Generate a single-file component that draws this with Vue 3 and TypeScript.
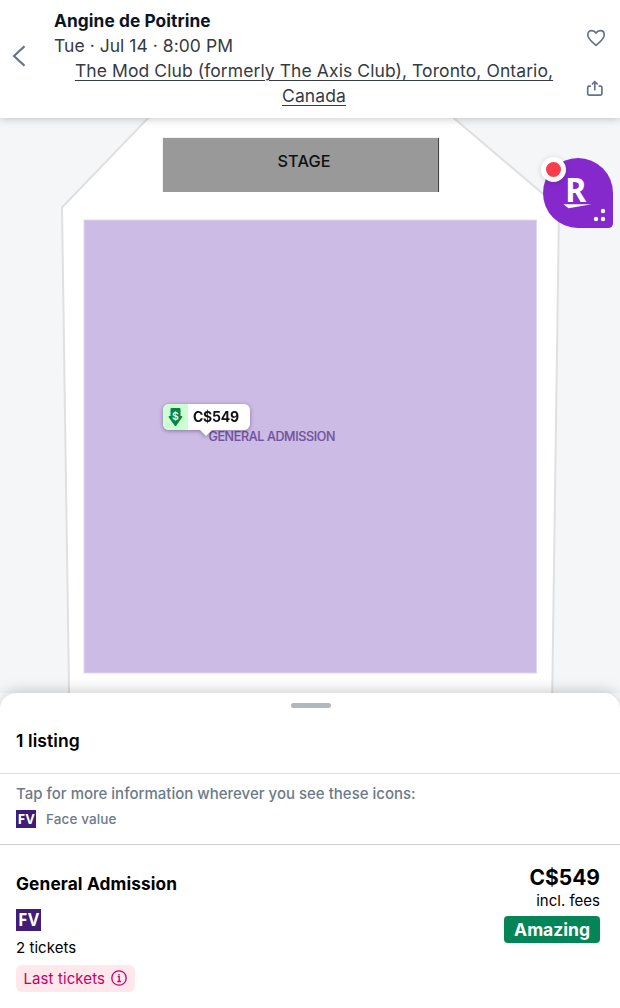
<script setup lang="ts">
interface Listing {
  section: string
  quantity: string
  price: string
  rating: string
  notice: string
}

const event = {
  name: 'Angine de Poitrine',
  date: 'Tue · Jul 14 · 8:00 PM',
  venue: 'The Mod Club (formerly The Axis Club), Toronto, Ontario, Canada',
}

const listings: Listing[] = [
  { section: 'General Admission', quantity: '2 tickets', price: 'C$549', rating: 'Amazing', notice: 'Last tickets' },
]
</script>

<template>
  <div class="page">
    <header class="header">
      <button class="back" aria-label="Back">
        <svg width="14" height="22" viewBox="0 0 14 22"><path d="M12.500 1.200 2 11l10.500 9.800" /></svg>
      </button>
      <div class="event">
        <h1 class="name">{{ event.name }}</h1>
        <div class="date">{{ event.date }}</div>
        <a class="venue">{{ event.venue }}</a>
      </div>
      <div class="actions">
        <svg class="heart" width="20" height="18" viewBox="0 0 20 18"><path d="M10 16.300C7.600 14.100 1.800 10 1.800 5.900 1.800 3.200 3.400 1.700 5.500 1.700 7.500 1.700 9.200 2.700 10 4 10.800 2.700 12.500 1.700 14.500 1.700c2.100 0 3.700 1.500 3.700 4.200 0 4.100-5.800 8.200-8.200 10.400Z" /></svg>
        <svg class="share" width="18" height="18" viewBox="0 0 18 18"><path d="M4.300 6.200H3Q1.700 6.200 1.700 7.500v6.300Q1.700 15.100 3 15.100h11.600q1.300 0 1.300-1.300V7.500q0-1.300-1.300-1.300h-1.300M8.800 9.700V2M6.400 4 8.800 1.500 11.200 4" /></svg>
      </div>
    </header>

    <main class="map">
      <svg class="venue-map" width="620" height="590" viewBox="0 118 620 590">
        <path d="M152 114 62 207.500 69.300 710H552L559 207.500 449 114Z" fill="#fff" stroke="#e0e0e0" stroke-width="2" />
        <rect x="162.500" y="137.500" width="277" height="54.500" fill="#e5e5e5" />
        <rect x="163" y="138" width="276" height="54" fill="#999" />
        <path d="M438.500 138v54" stroke="#444" />
        <text class="stage" x="304" y="166.600" textLength="53">STAGE</text>
        <rect x="84" y="220" width="452.500" height="453" fill="#cbbbe5" stroke="#dfd7ef" />
        <text class="ga" x="271.900" y="440.900" textLength="127">GENERAL ADMISSION</text>
      </svg>
      <div class="pin">
        <span class="pin-icon">
          <svg width="15" height="19" viewBox="0 0 15 19">
            <path d="M3.500 0h8q1 0 1 1v7h1.200q1.100.2.500 1.200L8.200 17.700q-.7.800-1.400 0L.7 9.200Q.2 8.200 1.300 8H2.500V1q0-1 1-1Z" fill="#078443" />
            <text x="7.500" y="11.500">$</text>
          </svg>
        </span>
        <span class="pin-price">C$549</span>
      </div>
      <div class="rewards">
        <svg width="70" height="70" viewBox="0 0 70 70">
          <path d="M35 0a35 35 0 0 1 35 35v30q0 5-5 5H35A35 35 0 0 1 35 0Z" fill="#8529cd" />
          <text class="rewards-r" x="22.300" y="43.800" textLength="21" lengthAdjust="spacingAndGlyphs">R</text>
          <path d="M20.500 46.300H48.500L25.500 50.200Z" fill="#fff" />
          <g fill="#fff"><circle cx="60" cy="53" r="2.200" /><circle cx="53" cy="61" r="2.200" /><circle cx="60" cy="61" r="2.200" /></g>
        </svg>
        <span class="alert"></span>
      </div>
    </main>

    <section class="sheet">
      <div class="sheet-head">
        <span class="handle"></span>
        <h2 class="count">1 listing</h2>
      </div>
      <div class="legend">
        <p class="hint">Tap for more information wherever you see these icons:</p>
        <div class="legend-item"><span class="fv small">FV</span><span>Face value</span></div>
      </div>
      <article v-for="item in listings" :key="item.section" class="listing">
        <div class="details">
          <h3 class="section">{{ item.section }}</h3>
          <span class="fv">FV</span>
          <div class="quantity">{{ item.quantity }}</div>
          <div class="notice">
            <span>{{ item.notice }}</span>
            <svg width="16" height="16" viewBox="0 0 16 16"><circle cx="8" cy="8" r="7.200" /><path d="M6.700 6.700H8.200v4.800M6.300 11.500h3.800M8 4v1.500" /></svg>
          </div>
        </div>
        <div class="pricing">
          <div class="price">{{ item.price }}</div>
          <div class="fees">incl. fees</div>
          <div class="rating">{{ item.rating }}</div>
        </div>
      </article>
    </section>
  </div>
</template>

<style>
body { margin: 0; }
</style>

<style scoped>
.page { width: 620px; height: 1008px; overflow: hidden; display: flex; flex-direction: column; background: #fff; color: #04111d; font-family: Inter, sans-serif; }
h1, h2, h3, p { margin: 0; }
.header { height: 118px; flex: none; display: flex; position: relative; z-index: 2; background: #fff; box-shadow: 0 1px 8px rgba(0, 0, 0, .22); }
.back { width: 54px; padding: 0 0 7px 12px; display: flex; align-items: center; border: 0; background: none; }
.back svg { fill: none; stroke: #64748b; stroke-width: 2.200; }
.event { width: 520px; padding-top: 8px; font-size: 17.500px; line-height: 25px; color: #353a43; }
.name { font-size: 17.300px; font-weight: 700; line-height: 25px; letter-spacing: .08px; color: #0b151f; }
.date { letter-spacing: .04px; }
.venue { display: block; text-align: center; letter-spacing: .085px; text-decoration: underline; text-decoration-thickness: 1px; text-underline-offset: 3px; }
.actions { flex: 1; display: flex; flex-direction: column; align-items: center; padding-top: 29px; gap: 33px; }
.actions svg { fill: none; stroke: #64748b; stroke-width: 1.700; stroke-linejoin: round; stroke-linecap: round; }
.heart { margin-right: 2px; }
.share { margin-right: 4px; }
.map { height: 575px; flex: none; position: relative; background: #f4f6f8; }
.venue-map { display: block; }
.stage { font-size: 16.300px; font-weight: 500; text-anchor: middle; fill: #111; }
.ga { font-size: 12.500px; font-weight: 500; text-anchor: middle; fill: #71549d; stroke: #71549d; stroke-width: .15px; }
.pin { position: absolute; left: 163px; top: 286px; width: 87px; height: 26px; display: flex; border-radius: 6px; background: #fff; filter: drop-shadow(0 1px 2px rgba(50, 30, 80, .45)); }
.pin::after { content: ''; position: absolute; left: 37px; top: 26px; border: 6px solid transparent; border-top-color: #fff; border-bottom: 0; }
.pin-icon { width: 25px; display: flex; align-items: center; justify-content: center; background: #ccffd1; border-radius: 6px 0 0 6px; }
.pin-icon text { font-size: 10.500px; font-weight: 600; text-anchor: middle; fill: #e1ffe8; }
.pin-price { padding-left: 5px; font-size: 14px; font-weight: 700; line-height: 26px; letter-spacing: -.25px; color: #111; }
.rewards { position: absolute; left: 543px; top: 40px; width: 70px; height: 70px; }
.rewards svg { display: block; }
.rewards-r { font-family: "Noto Sans", sans-serif; font-size: 34px; font-weight: 700; fill: #fff; }
.alert { position: absolute; left: -2px; top: -1px; width: 15px; height: 15px; border: 5px solid #fff; border-radius: 50%; background: #f83e4b; box-shadow: 0 1px 6px rgba(0, 0, 0, .14); }
.sheet { flex: 1; position: relative; z-index: 1; border-radius: 16px 16px 0 0; background: #fff; box-shadow: 0 0 16px rgba(0, 0, 0, .25); color: #000; }
.sheet-head { height: 81px; box-sizing: border-box; display: flex; flex-direction: column; padding: 10px 16px 0; border-bottom: 1px solid #dedede; }
.handle { width: 40px; height: 5px; flex: none; align-self: center; transform: translateX(1px); border-radius: 3px; background: #afb8c1; }
.count { margin-top: 20px; font-size: 17.500px; font-weight: 600; line-height: 25px; letter-spacing: .1px; }
.legend { height: 71px; box-sizing: border-box; padding: 10px 16px 0; border-bottom: 1px solid #d2d2d2; color: #6c7a8a; font-weight: 500; }
.hint { font-size: 15px; line-height: 20px; }
.legend-item { display: flex; align-items: center; gap: 10px; margin-top: 6px; font-size: 13.500px; line-height: 18px; letter-spacing: .1px; }
.fv { display: flex; align-items: center; justify-content: center; width: 25px; height: 22px; background: #401c77; color: #fff; font-family: "Open Sans", sans-serif; font-size: 17px; line-height: 22px; font-weight: 700; letter-spacing: .6px; text-indent: .6px; }
.fv.small { width: 20px; height: 18px; font-size: 14px; line-height: 18px; letter-spacing: .4px; text-indent: .4px; }
.listing { display: flex; justify-content: space-between; padding: 20px 20px 0 16px; }
.section { margin: 7px 0 13px; font-size: 17.300px; font-weight: 700; line-height: 24px; letter-spacing: .12px; }
.quantity { margin-top: 7px; font-size: 15px; line-height: 20px; letter-spacing: .05px; }
.notice { display: flex; align-items: center; justify-content: space-between; width: 119px; height: 27px; box-sizing: border-box; margin-top: 7px; padding: 0 8px 1px 7.500px; border-radius: 6px; background: #ffe7eb; color: #c50067; font-size: 15px; letter-spacing: .1px; white-space: nowrap; }
.notice span { transform: translateY(-.5px); }
.notice svg { fill: none; stroke: #c50067; stroke-width: 1.300; flex: none; }
.pricing { display: flex; flex-direction: column; align-items: flex-end; }
.price { font-size: 21px; font-weight: 700; line-height: 25px; }
.fees { margin-top: 1px; font-size: 15px; line-height: 20px; }
.rating { margin-top: 5px; height: 27px; padding: 0 10px; border-radius: 4px; background: #048557; color: #fff; font-size: 17.500px; font-weight: 700; line-height: 27px; }
</style>
